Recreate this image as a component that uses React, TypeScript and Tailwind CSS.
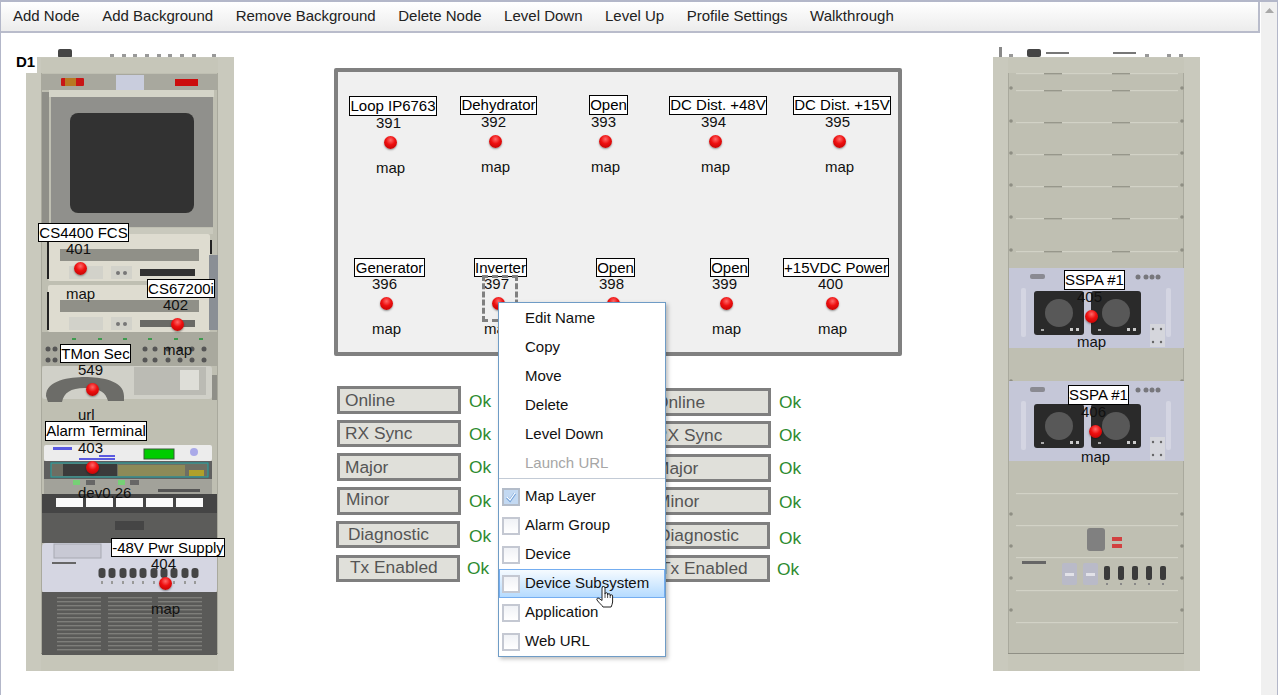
import * as React from 'react';

const menuBar = ['Add Node', 'Add Background', 'Remove Background', 'Delete Node', 'Level Down', 'Level Up', 'Profile Settings', 'Walkthrough'];

interface MapNode {
  label: string;
  num: string;
  link?: string;
  pos: string; // where the node sits on its rack or panel
  width: string;
  indent: string; // number and link text start further in than the label box
  tall?: boolean;
  lift?: boolean;
}

const panelNodes: MapNode[] = [
  {label: 'Loop IP6763', num: '391', pos: 'left-[11px] top-[24px]', width: 'w-[88px]', indent: 'pl-[27px]', tall: true},
  {label: 'Dehydrator', num: '392', pos: 'left-[122px] top-[24px]', width: 'w-[77px]', indent: 'pl-[21px]', lift: true},
  {label: 'Open', num: '393', pos: 'left-[251px] top-[23px]', width: 'w-[39px]', indent: 'pl-[2px]', tall: true},
  {label: 'DC Dist. +48V', num: '394', pos: 'left-[331px] top-[24px]', width: 'w-[98px]', indent: 'pl-[32px]', lift: true},
  {label: 'DC Dist. +15V', num: '395', pos: 'left-[455px] top-[24px]', width: 'w-[98px]', indent: 'pl-[32px]', lift: true},
  {label: 'Generator', num: '396', pos: 'left-[16px] top-[186px]', width: 'w-[71px]', indent: 'pl-[18px]'},
  {label: 'Inverter', num: '397', pos: 'left-[136px] top-[186px]', width: 'w-[53px]', indent: 'pl-[10px]'},
  {label: 'Open', num: '398', pos: 'left-[258px] top-[186px]', width: 'w-[39px]', indent: 'pl-[3px]'},
  {label: 'Open', num: '399', pos: 'left-[372px] top-[186px]', width: 'w-[39px]', indent: 'pl-[2px]'},
  {label: '+15VDC Power', num: '400', pos: 'left-[445px] top-[186px]', width: 'w-[106px]', indent: 'pl-[35px]'}
];

const leftRackNodes: MapNode[] = [
  {label: 'CS4400 FCS', num: '401', pos: 'left-[12px] top-[176px]', width: 'w-[91px]', indent: 'pl-[28px]'},
  {label: 'CS67200i', num: '402', pos: 'left-[121px] top-[232px]', width: 'w-[68px]', indent: 'pl-[16px]'},
  {label: 'TMon Sec', num: '549', link: 'url', pos: 'left-[34px] top-[297px]', width: 'w-[71px]', indent: 'pl-[18px]'},
  {label: 'Alarm Terminal', num: '403', link: 'dev0.26', pos: 'left-[19px] top-[374px]', width: 'w-[102px]', indent: 'pl-[33px]', tall: true},
  {label: '-48V Pwr Supply', num: '404', pos: 'left-[85px] top-[491px]', width: 'w-[114px]', indent: 'pl-[40px]'}
];

const rightRackNodes: MapNode[] = [
  {label: 'SSPA #1', num: '405', pos: 'left-[71px] top-[223px]', width: 'w-[61px]', indent: 'pl-[13px]', tall: true},
  {label: 'SSPA #1', num: '406', pos: 'left-[75px] top-[338px]', width: 'w-[61px]', indent: 'pl-[13px]', tall: true}
];

interface StatusRow {
  label: string;
  row: string;
  box: string;
  ok: string;
}

const statusLeft: StatusRow[] = [
  {label: 'Online', row: '', box: 'h-[28px] pb-px pl-[5px]', ok: 'ml-2 pt-[2px]'},
  {label: 'RX Sync', row: 'mt-[6px]', box: 'h-[27px] pb-[2px] pl-[5px]', ok: 'ml-2'},
  {label: 'Major', row: 'mt-[6px]', box: 'h-[28px] pb-px pl-[5px]', ok: 'ml-2'},
  {label: 'Minor', row: 'mt-[6px]', box: 'h-[28px] pb-[4px] pl-[6px]', ok: 'ml-2'},
  {label: 'Diagnostic', row: '-ml-px mt-[6px]', box: 'h-[27px] pb-[2px] pl-[9px]', ok: 'ml-[9px] pt-[3px]'},
  {label: 'Tx Enabled', row: '-ml-px mt-[7px]', box: 'h-[27px] pb-[3px] pl-[11px]', ok: 'ml-[7px] pb-px'}
];

const statusRight: StatusRow[] = [
  {label: 'Online', row: '', box: 'h-[28px] pb-px pl-[5px]', ok: 'ml-2'},
  {label: 'RX Sync', row: 'mt-[5px]', box: 'h-[27px] pl-[5px] pt-px', ok: 'ml-2'},
  {label: 'Major', row: 'mt-[6px]', box: 'h-[28px] pb-px pl-[5px]', ok: 'ml-2'},
  {label: 'Minor', row: 'mt-[5px]', box: 'h-[28px] pb-px pl-[6px]', ok: 'ml-2 pt-[2px]'},
  {label: 'Diagnostic', row: '-ml-px mt-[7px]', box: 'h-[27px] pb-px pl-[9px]', ok: 'ml-[9px] pt-[5px]'},
  {label: 'Tx Enabled', row: '-ml-px mt-[6px]', box: 'h-[27px] pb-px pl-[11px]', ok: 'ml-[7px]'}
];

const NodeMarker = ({node}: {node: MapNode}) => (
  <div className={`absolute flex flex-col items-start text-[15px] leading-[17px] text-[#111] ${node.pos}`}>
    <div
      className={`flex items-center justify-center whitespace-nowrap border border-black bg-white text-black ${node.width} ${
        node.tall ? 'h-[20px]' : 'h-[19px]'
      } ${node.lift ? 'pb-[3px]' : 'pb-px'}`}
    >
      {node.label}
    </div>
    <div className={`-mt-[2px] flex flex-col items-start ${node.indent}`}>
      <span>{node.num}</span>
      <span className="ml-[8px] mt-[5px] h-[13px] w-[13px] rounded-full bg-[radial-gradient(circle_at_50%_32%,#ff6a6a_0%,#ee0f0f_42%,#b00000_100%)] shadow-[0_1px_2px_rgba(0,0,0,0.4)]" />
      <span className="mt-[10px]">{node.link ?? 'map'}</span>
    </div>
  </div>
);

const RackFrame = ({x, w}: {x: number; w: number}) => (
  <>
    <rect x={x} y={57} width={w} height={614} fill="#c9c9bd" />
    <rect x={x + 15} y={58} width={w - 31} height={15} fill="#c6c6b9" />
    <rect x={x + 15} y={73} width={w - 31} height={581} fill="#bfbfb2" />
    <rect x={x + 15} y={654} width={w - 31} height={17} fill="#c6c6b9" />
    <rect x={x + 15} y={73} width={1} height={581} fill="#a9a99d" />
    <rect x={x + w - 17} y={73} width={1} height={581} fill="#a9a99d" />
    <rect x={x + 15} y={653} width={w - 31} height={1} fill="#8f8f85" />
  </>
);

const LeftRack = () => (
  <svg className="absolute inset-0 overflow-visible" width={208} height={624} viewBox="26 47 208 624">
    <defs>
      <filter id="soft-left" x="-5%" y="-5%" width="110%" height="110%">
        <feGaussianBlur stdDeviation="0.65" />
      </filter>
    </defs>
    <g filter="url(#soft-left)">
      <rect x={58} y={49} width={14} height={9} rx={2} fill="#444" />
      {[112, 124, 135, 147, 159, 170, 182, 194, 214].map(cx => (
        <rect key={cx} x={cx - 2} y={54} width={4} height={4} fill="#999" />
      ))}
      <RackFrame x={26} w={208} />
      {/* alarm panel */}
      <rect x={42} y={74} width={175} height={16} fill="#a8a89e" />
      <rect x={61} y={78} width={23} height={8} rx={1} fill="#c81818" />
      <rect x={65} y={78} width={11} height={8} fill="#b87820" />
      <rect x={175} y={79} width={23} height={7} fill="#cc1010" />
      <rect x={116} y={75} width={28} height={15} fill="#c9cddd" />
      {/* monitor */}
      <rect x={49} y={90} width={165} height={7} fill="#d4d4c8" />
      <rect x={51} y={97} width={162} height={130} fill="#90908c" />
      <rect x={70} y={113} width={124} height={100} rx={8} fill="#333" />
      <rect x={42} y={92} width={7} height={136} fill="#8f8f88" />
      <rect x={48} y={228} width={165} height={6} fill="#c9c9bd" />
      {/* fcs shelves */}
      {[0, 51].map(dy => (
        <g key={dy}>
          <rect x={48} y={234 + dy} width={162} height={47} rx={2} fill="#dedcd0" />
          <rect x={47} y={241 + dy} width={2} height={38} fill="#222" />
          <rect x={60} y={249 + dy} width={139} height={12} fill="#909088" />
          <rect x={69} y={266 + dy} width={34} height={13} fill="#d2d2ca" />
          <rect x={111} y={266 + dy} width={21} height={13} fill="#d2d2ca" />
          <circle cx={118} cy={273 + dy} r={2} fill="#777" />
          <circle cx={125} cy={273 + dy} r={2} fill="#777" />
          <rect x={140} y={269 + dy} width={55} height={7} fill={dy ? '#6a6a66' : '#333'} />
        </g>
      ))}
      <rect x={209} y={255} width={9} height={75} fill="#8a8f95" />
      <rect x={210} y={240} width={2} height={14} fill="#222" />
      {/* connector strip */}
      <rect x={42} y={332} width={175} height={34} fill="#a9a99e" />
      {[48, 55, 145, 155, 168, 180, 192, 204].map(cx => (
        <g key={cx}>
          <circle cx={cx} cy={349} r={2.5} fill="#555" />
          <circle cx={cx} cy={360} r={2.5} fill="#555" />
        </g>
      ))}
      {[72, 98, 123, 148, 174, 199].map(cx => (
        <rect key={cx} x={cx} y={338} width={4} height={2} fill="#3d9a4d" />
      ))}
      {/* phone */}
      <rect x={42} y={366} width={170} height={33} rx={3} fill="#d0d0c8" />
      <rect x={134} y={367} width={72} height={28} fill="#bbbbb4" />
      <rect x={180} y={370} width={19} height={20} fill="#deded8" />
      <path d="M46 396 C46 380 70 377 85 377 C100 377 124 380 124 396 L124 401 L108 401 C106 393 100 388 85 388 C70 388 64 393 62 402 L48 402 Z" fill="#6c6c68" />
      <rect x={212} y={375} width={5} height={25} fill="#8f8f88" />
      {/* switch stack */}
      <rect x={44} y={445} width={168} height={16} rx={2} fill="#ececec" />
      <rect x={53} y={447} width={19} height={3} fill="#5a5ae0" />
      <rect x={99} y={455} width={16} height={2} fill="#5a5ae0" />
      <rect x={79} y={458} width={36} height={2} fill="#5a5ae0" />
      <rect x={144} y={449} width={30} height={10} fill="#00cc00" stroke="#3a5a3a" />
      <circle cx={194} cy={452} r={4} fill="#a9a9e8" />
      <rect x={44} y={461} width={168} height={18} fill="#5e5e5e" />
      <rect x={51} y={463} width={157} height={14} fill="#6e6e64" stroke="#1fa5a5" />
      <rect x={63} y={464} width={54} height={12} fill="#3a3a3a" />
      <rect x={118} y={465} width={67} height={11} fill="#8d8a58" />
      <rect x={189} y={470} width={15} height={6} fill="#b0a02a" />
      <rect x={44} y={479} width={168} height={16} fill="#a2a29a" />
      <rect x={73} y={480} width={7} height={5} fill="#76d076" />
      <rect x={118} y={480} width={7} height={5} fill="#76d076" />
      <rect x={86} y={480} width={9} height={5} fill="#666" />
      <rect x={130} y={480} width={9} height={5} fill="#666" />
      <rect x={158} y={489} width={42} height={3} fill="#555" />
      {/* patch panel */}
      <rect x={42} y={494} width={175} height={19} fill="#444" />
      {[56, 86, 116, 146, 176].map(px => (
        <rect key={px} x={px} y={498} width={27} height={9} fill="#fafafa" />
      ))}
      <rect x={42} y={513} width={175} height={30} fill="#5c5c5a" />
      <rect x={115} y={521} width={29} height={9} fill="#444" />
      {/* power shelf */}
      <rect x={42} y={543} width={175} height={50} rx={4} fill="#d5d6e2" />
      <rect x={54} y={544} width={47} height={14} fill="#c8c9d4" stroke="#a8a9b2" />
      <rect x={52} y={562} width={24} height={2} fill="#666" />
      {[102, 112, 123, 133, 143, 154, 164, 174, 185, 195].map(cx => (
        <g key={cx}>
          <rect x={cx - 3.5} y={568} width={7} height={10} rx={3} fill="#444" />
          <rect x={cx - 1} y={581} width={2} height={3} fill="#999" />
        </g>
      ))}
      {/* bottom vent */}
      <rect x={42} y={592} width={175} height={63} fill="#5a5a58" />
      {Array.from({length: 14}, (_, i) => 597 + i * 4).map(ly => (
        <g key={ly}>
          {[57, 108, 158].map(lx => (
            <rect key={lx} x={lx} y={ly} width={44} height={1.4} fill="#7e7e7a" />
          ))}
        </g>
      ))}
    </g>
  </svg>
);

const SspaPanel = ({dy}: {dy: number}) => (
  <g>
    <rect x={1009} y={268 + dy} width={175} height={80} fill="#c5c7d8" />
    <rect x={1021} y={288 + dy} width={5} height={49} rx={2} fill="#d4d5e2" />
    <rect x={1166} y={288 + dy} width={5} height={49} rx={2} fill="#d4d5e2" />
    <rect x={1030} y={274 + dy} width={15} height={5} rx={2} fill="#8a8a92" />
    {[1138, 1146, 1152, 1158].map(cx => (
      <circle key={cx} cx={cx} cy={277 + dy} r={2.5} fill="#77777c" />
    ))}
    {[1034, 1091].map(fx => (
      <g key={fx}>
        <rect x={fx} y={291 + dy} width={50} height={44} rx={3} fill="#2a2a2a" />
        <circle cx={fx + 25} cy={313 + dy} r={14} fill="#585858" />
        <rect x={fx + 36} y={328 + dy} width={3} height={3} fill="#ccc" />
        <rect x={fx + 42} y={328 + dy} width={3} height={3} fill="#ccc" />
        <rect x={fx + 7} y={329 + dy} width={3} height={2} fill="#aaa" />
      </g>
    ))}
    <rect x={1150} y={324 + dy} width={15} height={23} fill="#d5d6dc" />
    {[1153, 1161].map(cx => (
      <g key={cx}>
        <circle cx={cx} cy={329 + dy} r={1.2} fill="#666" />
        <circle cx={cx} cy={342 + dy} r={1.2} fill="#666" />
      </g>
    ))}
  </g>
);

const RightRack = () => (
  <svg className="absolute inset-0 overflow-visible" width={207} height={624} viewBox="993 47 207 624">
    <defs>
      <filter id="soft-right" x="-5%" y="-5%" width="110%" height="110%">
        <feGaussianBlur stdDeviation="0.5" />
      </filter>
    </defs>
    <g filter="url(#soft-right)">
      <rect x={999} y={47} width={3} height={10} fill="#888" />
      <rect x={1027} y={49} width={14} height={8} rx={2} fill="#444" />
      <rect x={1046} y={52} width={23} height={2} fill="#777" />
      <rect x={1113} y={52} width={23} height={2} fill="#777" />
      {[1011, 1147, 1169, 1181].map(cx => (
        <rect key={cx} x={cx - 2} y={54} width={4} height={3} fill="#999" />
      ))}
      <RackFrame x={993} w={207} />
      {[73, 90, 122, 154, 186, 218, 251, 493, 525, 557, 590, 622].map(ly => (
        <rect key={ly} x={1016} y={ly} width={162} height={1.2} fill="#d2d2c6" />
      ))}
      {[73, 90, 122, 154, 186, 218, 251].map(ly => (
        <g key={ly}>
          <rect x={1044} y={ly} width={18} height={1.4} fill="#97978b" />
          <rect x={1112} y={ly} width={18} height={1.4} fill="#97978b" />
        </g>
      ))}
      {[88, 121, 153, 185, 217, 250, 381, 514, 546, 578, 610].map(ly => (
        <g key={ly}>
          <circle cx={1011} cy={ly} r={1.8} fill="#8f8f84" />
          <circle cx={1182} cy={ly} r={1.8} fill="#8f8f84" />
        </g>
      ))}
      <SspaPanel dy={0} />
      <SspaPanel dy={113} />
      <rect x={1087} y={528} width={18} height={23} rx={3} fill="#808080" />
      <rect x={1112} y={537} width={10} height={4} fill="#d24040" />
      <rect x={1112} y={544} width={10} height={4} fill="#d24040" />
      <rect x={1022} y={561} width={24} height={3} fill="#666" />
      {[1062, 1083].map(bx => (
        <g key={bx}>
          <rect x={bx} y={563} width={15} height={22} rx={2} fill="#b9bac8" />
          <rect x={bx + 3} y={573} width={9} height={3} fill="#e2e2e8" />
        </g>
      ))}
      {[1107, 1121, 1135, 1149, 1163].map(tx => (
        <g key={tx}>
          <rect x={tx - 3} y={566} width={6} height={14} rx={2} fill="#3a3a3a" />
          <rect x={tx - 1} y={583} width={2} height={2} fill="#888" />
        </g>
      ))}
    </g>
  </svg>
);

const StatusColumn = ({rows, className}: {rows: StatusRow[]; className: string}) => (
  <div className={`flex flex-col items-start text-[17.33px] leading-[20px] ${className}`}>
    {rows.map(row => (
      <div key={row.label} className={`flex items-center ${row.row}`}>
        <div className={`flex w-[124px] items-center border-[3px] border-[#7f7f7f] bg-[#e0e0da] text-[#555] ${row.box}`}>{row.label}</div>
        <span className={`text-[#2e8b2e] ${row.ok}`}>Ok</span>
      </div>
    ))}
  </div>
);

const CheckBox = ({checked}: {checked?: boolean}) => (
  <span
    className={`flex h-[18px] w-[18px] shrink-0 items-center justify-center border-2 ${
      checked ? 'border-[#b3bcc9] bg-[#c3d9f2]' : 'border-[#c4c8d2] bg-gradient-to-b from-[#f0f2f6] to-white'
    }`}
  >
    {checked ? (
      <svg width={12} height={12} viewBox="0 0 12 12">
        <path d="M2 6.5 L5 9.5 L10 2.5" fill="none" stroke="#6f9fd8" strokeWidth={2.6} />
        <path d="M2 6 L5 9 L10 2" fill="none" stroke="#ffffff" strokeWidth={1.2} />
      </svg>
    ) : null}
  </span>
);

const ContextMenu = () => (
  <div className="absolute left-[164px] top-[234px] z-10 flex w-[168px] flex-col border border-[#6f9cc6] bg-white pt-px text-[15px] text-[#111] shadow-[2px_2px_4px_rgba(0,0,0,0.25)]">
    {['Edit Name', 'Copy', 'Move', 'Delete', 'Level Down'].map(item => (
      <div key={item} className="flex h-[29px] items-center pl-[26px]">
        {item}
      </div>
    ))}
    <div className="flex h-[29px] items-center pl-[26px] text-[#a6a6a6]">Launch URL</div>
    <div className="mb-[3px] h-px bg-[#c3cbd6]" />
    {['Map Layer', 'Alarm Group', 'Device'].map(item => (
      <div key={item} className="flex h-[29px] items-center gap-[5px] pl-[3px]">
        <CheckBox checked={item === 'Map Layer'} />
        {item}
      </div>
    ))}
    <div className="relative flex h-[29px] items-center gap-[5px] border border-[#74adf0] bg-gradient-to-b from-[#f6fbff] to-[#b5dbff] pl-[2px]">
      <CheckBox />
      Device Subsystem
      {/* pointer cursor over the hovered entry */}
      <svg className="absolute left-[95px] top-[15px]" width={19} height={23} viewBox="0 0 19 23">
        <path
          d="M7 13 V3 a1.5 1.5 0 0 1 3 0 V9 a1.3 1.3 0 0 1 2.6 0 V10 a1.3 1.3 0 0 1 2.6 0 V11 a1.2 1.2 0 0 1 2.4 0 V17 c0 2 -1 3 -1.5 5 H8 C7 20 4 18 2 15 c-.8-1.3 .8-2.6 2-1.6 L7 15.5 Z"
          fill="#fff"
          stroke="#222"
          strokeWidth={1}
        />
        <path d="M10 9 V13 M12.6 10 V13 M15.2 11 V13" stroke="#222" strokeWidth={0.8} />
      </svg>
    </div>
    {['Application', 'Web URL'].map(item => (
      <div key={item} className="flex h-[29px] items-center gap-[5px] pl-[3px]">
        <CheckBox />
        {item}
      </div>
    ))}
  </div>
);

export default function App() {
  return (
    <div className="flex h-[695px] w-[1278px] overflow-hidden border-t-2 border-[#b3b7c9] bg-white font-['Liberation_Sans',Arial,sans-serif]">
      <div className="flex min-w-0 flex-1 flex-col border-l border-[#b3b7c9]">
        <div className="mr-px flex h-[31px] shrink-0 items-center gap-[22.5px] border-b-2 border-r-2 border-[#b9bccb] bg-gradient-to-b from-white to-[#ececec] pl-3 text-[15px] text-[#222]">
          {menuBar.map(item => (
            <span key={item}>{item}</span>
          ))}
        </div>
        <div className="flex flex-1 items-start">
          <div className="relative ml-[25px] mt-[14px] h-[624px] w-[208px] shrink-0">
            <LeftRack />
            <div className="absolute -left-[11px] top-[4px] flex h-[22px] w-[22px] items-center bg-white pl-px text-[15px] font-bold text-black">D1</div>
            {leftRackNodes.map(node => (
              <NodeMarker key={node.num} node={node} />
            ))}
          </div>
          <div className="relative ml-[100px] mt-[35px] w-[568px] shrink-0">
            <div className="relative h-[288px] rounded-[2px] border-4 border-[#808080] bg-[#f0f0f0]">
              {panelNodes.map(node => (
                <NodeMarker key={node.num} node={node} />
              ))}
              <div className="absolute left-[144px] top-[203px] h-[47px] w-[36px] border-[3px] border-dashed border-[#808080]" />
            </div>
            <div className="mt-[30px] flex items-start">
              <StatusColumn rows={statusLeft} className="ml-[3px] w-[310px]" />
              <StatusColumn rows={statusRight} className="mt-[2px]" />
            </div>
            <ContextMenu />
          </div>
          <div className="relative ml-[91px] mt-[14px] h-[624px] w-[207px] shrink-0">
            <RightRack />
            {rightRackNodes.map(node => (
              <NodeMarker key={node.num} node={node} />
            ))}
          </div>
        </div>
      </div>
      <div className="flex w-[17px] shrink-0 flex-col items-center border-r border-[#b3b7c9] bg-[#f0f0f0] pt-[6px]">
        <svg width={9} height={5} viewBox="0 0 9 5">
          <path d="M4.5 0 L9 5 H0 Z" fill="#a8a8a8" />
        </svg>
      </div>
    </div>
  );
}
